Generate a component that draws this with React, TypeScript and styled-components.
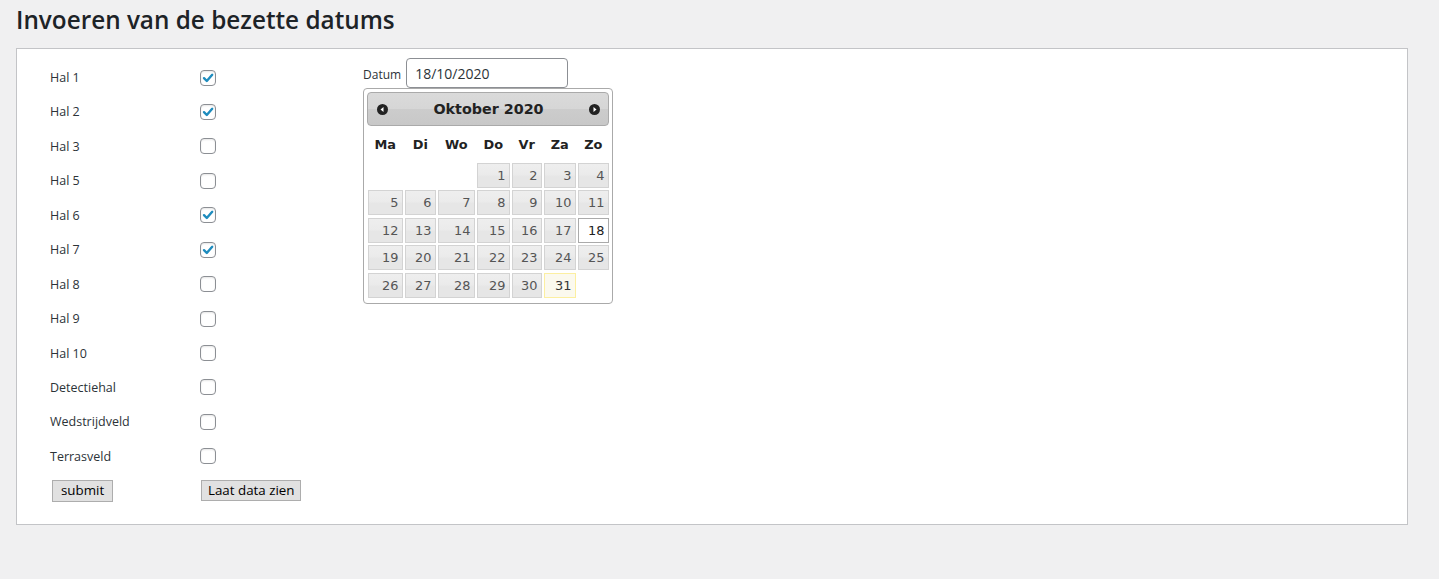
import React from "react";
import styled, { createGlobalStyle, css } from "styled-components";

const GlobalStyle = createGlobalStyle`
  html, body {
    margin: 0;
    padding: 0;
    background: #f0f0f1;
    font-family: "Open Sans", "Noto Sans", sans-serif;
    color: #3c434a;
  }
  * { box-sizing: border-box; }
`;

const Page = styled.div`
  width: 1439px;
  min-height: 579px;
  background: #f0f0f1;
`;

const Title = styled.h1`
  margin: 0 0 13px 16px;
  padding-top: 5px;
  font-size: 24.3px;
  line-height: 30px;
  font-weight: 600;
  color: #1d2327;
`;

const Panel = styled.div`
  margin: 0 32px 0 16px;
  width: 1392px;
  background: #fff;
  border: 1px solid #c3c4c7;
  padding: 9px 0 16px 33px;
  display: flex;
  align-items: flex-start;
`;

const LeftCol = styled.div`
  width: 313px;
  padding-top: 2.3px;
  display: grid;
  grid-template-columns: 150px auto;
  grid-auto-rows: 34.45px;
  align-items: center;
`;

const Label = styled.span`
  font-size: 12.5px;
  color: #2c3338;
`;

const CheckBox = styled.span<{ $checked?: boolean }>`
  width: 16px;
  height: 16px;
  border: 1px solid #8c8f94;
  border-radius: 4px;
  background: #fff;
  box-shadow: inset 0 1px 2px rgba(0, 0, 0, 0.1);
  display: flex;
  align-items: center;
  justify-content: center;
`;

const Button = styled.button<{ $pad: number; $h: number; $ml: number }>`
  justify-self: start;
  margin-left: ${(p) => p.$ml}px;
  height: ${(p) => p.$h}px;
  padding: 0 ${(p) => p.$pad}px;
  background: #e1e1e1;
  border: 1px solid #adadad;
  border-radius: 0;
  font-family: "Open Sans", "Noto Sans", sans-serif;
  font-size: 13.33px;
  color: #000;
  line-height: 1;
`;

const RightCol = styled.div`
  display: flex;
  flex-direction: column;
  align-items: flex-start;
`;

const DateRow = styled.div`
  display: flex;
  align-items: baseline;
  gap: 5px;
`;

const DateLabel = styled.label`
  font-size: 12px;
  color: #2c3338;
`;

const DateInput = styled.input`
  width: 162px;
  height: 30px;
  border: 1px solid #8c8f94;
  border-radius: 4px;
  padding: 0 8px;
  font-family: "Open Sans", "Noto Sans", sans-serif;
  font-size: 14px;
  color: #2c3338;
  background: #fff;
  box-shadow: none;
  outline: none;
`;

const Picker = styled.div`
  width: 250px;
  border: 1px solid #aaaaaa;
  border-radius: 4px;
  padding: 3px 3px 5px;
  background: #fff;
  font-family: Verdana, "DejaVu Sans", sans-serif;
`;

const PickerHeader = styled.div`
  height: 34px;
  border: 1px solid #aaaaaa;
  border-radius: 4px;
  background: linear-gradient(to bottom, #dadada 0%, #d6d6d6 50%, #cccccc 51%, #c8c8c8 100%);
  display: flex;
  align-items: center;
  justify-content: space-between;
  padding: 0 8px 0 9px;
`;

const PickerTitle = styled.span`
  font-size: 14.3px;
  font-weight: bold;
  color: #222222;
`;

const DayNames = styled.div`
  display: grid;
  grid-template-columns: 34.5px 30.5px 36.5px 32.5px 29.5px 31.5px 30.5px;
  column-gap: 2.5px;
  height: 36px;
  align-items: center;
  padding-left: 1px;
`;

const DayName = styled.span`
  text-align: center;
  font-size: 12.9px;
  font-weight: bold;
  color: #222222;
`;

const Days = styled.div`
  display: grid;
  grid-template-columns: 34.5px 30.5px 36.5px 32.5px 29.5px 31.5px 30.5px;
  grid-auto-rows: 25px;
  column-gap: 2.5px;
  row-gap: 2.4px;
  padding: 1px 0 0 1px;
`;

const Day = styled.span<{ $variant?: "today" | "active" | "empty" }>`
  border: 1px solid #d3d3d3;
  background: linear-gradient(to bottom, #eeeeee 0%, #ebebeb 45%, #e6e6e6 55%, #e6e6e6 100%);
  color: #555555;
  font-size: 12.9px;
  display: flex;
  align-items: center;
  justify-content: flex-end;
  padding-right: 3px;
  ${(p) =>
    p.$variant === "today" &&
    css`
      border-color: #fcefa1;
      background: #fbf9ee;
      color: #363636;
    `}
  ${(p) =>
    p.$variant === "active" &&
    css`
      border-color: #aaaaaa;
      background: #ffffff;
      color: #212121;
    `}
  ${(p) =>
    p.$variant === "empty" &&
    css`
      border: none;
      background: none;
    `}
`;

const Arrow = ({ dir }: { dir: "w" | "e" }) => (
  <svg width="11" height="11" viewBox="0 0 11 11">
    <circle cx="5.5" cy="5.5" r="5.5" fill="#222" />
    {dir === "w" ? (
      <polygon points="3.5,5.5 6.5,3 6.5,8" fill="#fff" />
    ) : (
      <polygon points="7.5,5.5 4.5,3 4.5,8" fill="#fff" />
    )}
  </svg>
);

const Check = () => (
  <svg width="14" height="14" viewBox="0 0 14 14">
    <path d="M3 7.2 L5.8 10 L11.2 3.8" stroke="#1e8cbe" strokeWidth="2.4" fill="none" strokeLinecap="round" strokeLinejoin="round" />
  </svg>
);

const halls: [string, boolean][] = [
  ["Hal 1", true],
  ["Hal 2", true],
  ["Hal 3", false],
  ["Hal 5", false],
  ["Hal 6", true],
  ["Hal 7", true],
  ["Hal 8", false],
  ["Hal 9", false],
  ["Hal 10", false],
  ["Detectiehal", false],
  ["Wedstrijdveld", false],
  ["Terrasveld", false],
];

const dayNames = ["Ma", "Di", "Wo", "Do", "Vr", "Za", "Zo"];

export default function App() {
  const cells: (number | null)[] = [null, null, null];
  for (let i = 1; i <= 31; i++) cells.push(i);
  return (
    <Page>
      <GlobalStyle />
      <Title>Invoeren van de bezette datums</Title>
      <Panel>
        <LeftCol>
          {halls.map(([name, checked]) => (
            <React.Fragment key={name}>
              <Label>{name}</Label>
              <CheckBox $checked={checked}>{checked && <Check />}</CheckBox>
            </React.Fragment>
          ))}
          <Button $pad={8} $h={22} $ml={2}>submit</Button>
          <Button $pad={6} $h={21} $ml={1}>Laat data zien</Button>
        </LeftCol>
        <RightCol>
          <DateRow>
            <DateLabel>Datum</DateLabel>
            <DateInput defaultValue="18/10/2020" />
          </DateRow>
          <Picker>
            <PickerHeader>
              <Arrow dir="w" />
              <PickerTitle>Oktober 2020</PickerTitle>
              <Arrow dir="e" />
            </PickerHeader>
            <DayNames>
              {dayNames.map((d) => (
                <DayName key={d}>{d}</DayName>
              ))}
            </DayNames>
            <Days>
              {cells.map((c, i) =>
                c === null ? (
                  <Day key={"e" + i} $variant="empty" />
                ) : (
                  <Day key={c} $variant={c === 31 ? "today" : c === 18 ? "active" : undefined}>
                    {c}
                  </Day>
                )
              )}
            </Days>
          </Picker>
        </RightCol>
      </Panel>
    </Page>
  );
}
